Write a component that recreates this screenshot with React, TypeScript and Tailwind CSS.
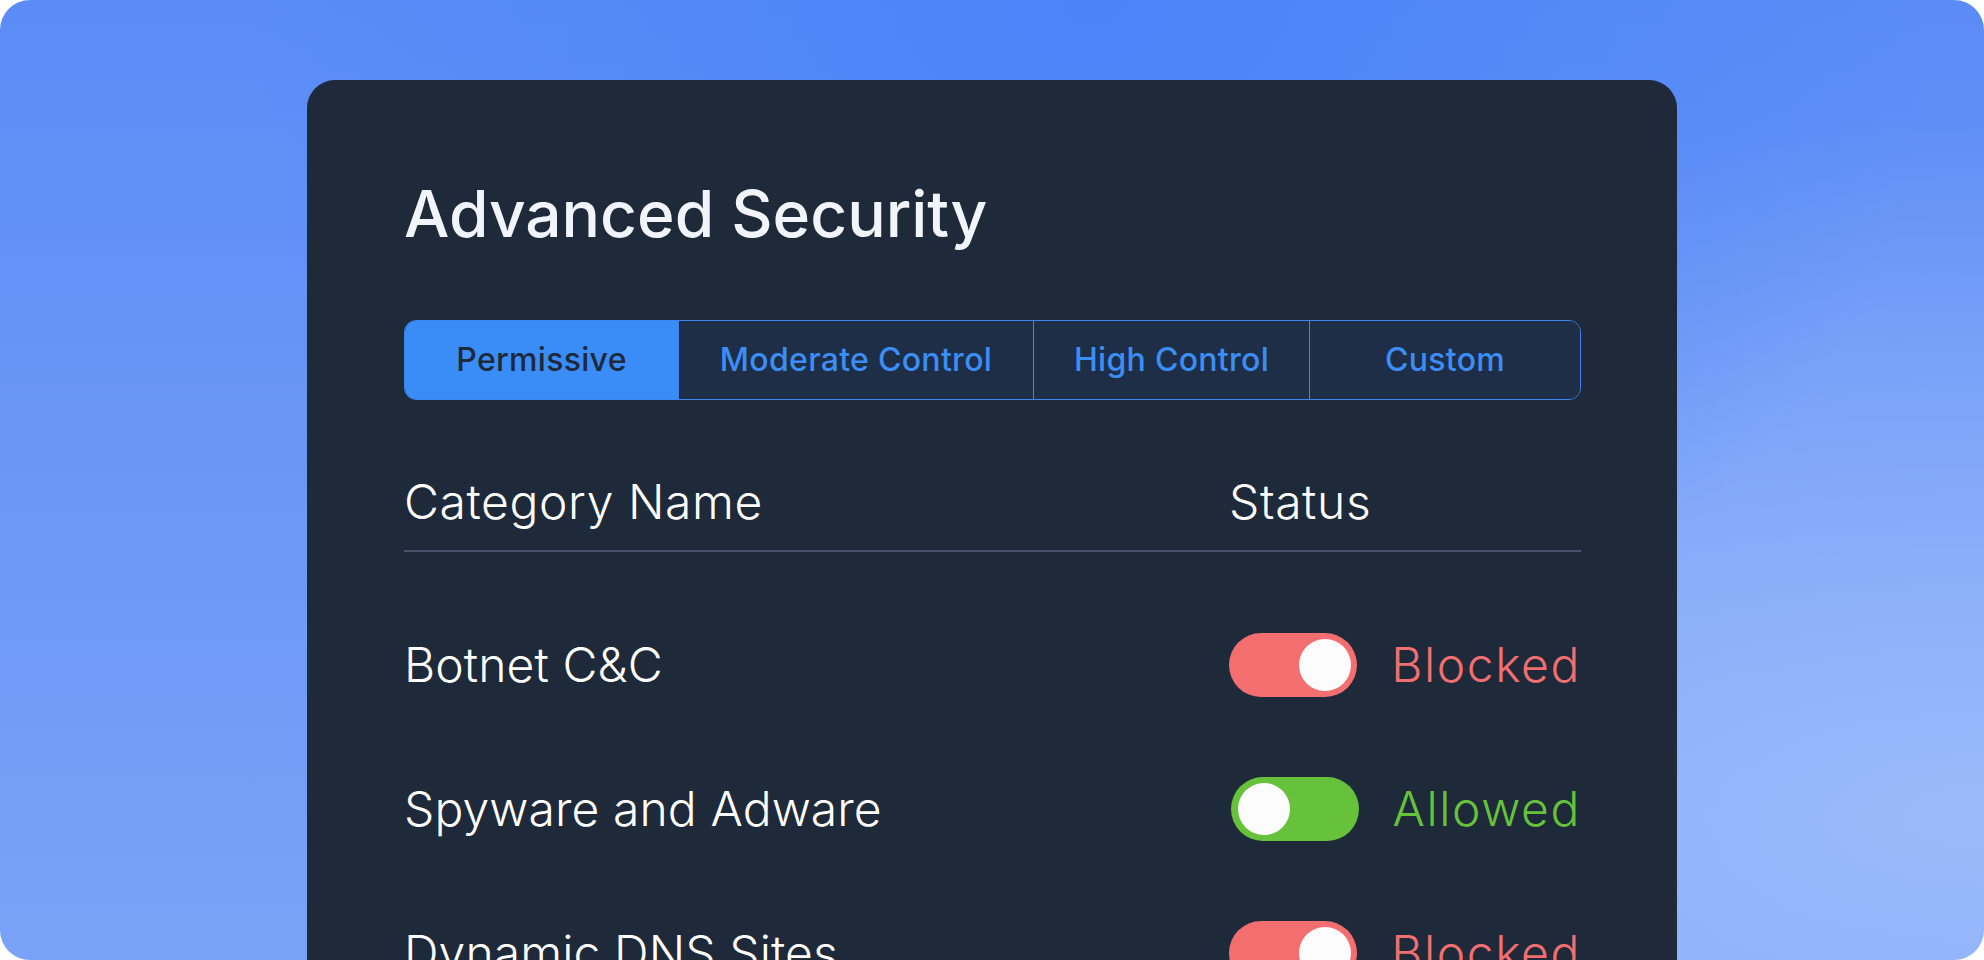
import React from 'react';

const tabs = [
    { label: 'Permissive', width: 'w-[273px]', active: true },
    { label: 'Moderate Control', width: 'w-[355px]', active: false },
    { label: 'High Control', width: 'w-[276px]', active: false },
    { label: 'Custom', width: 'flex-1', active: false },
];

const rows = [
    { name: 'Botnet C&C', blocked: true },
    { name: 'Spyware and Adware', blocked: false },
    { name: 'Dynamic DNS Sites', blocked: true },
];

function Toggle({ on }: { on: boolean }) {
    // "on" = blocked, knob sits right
    return (
        <div
            className={
                on
                    ? 'w-[128px] h-[64px] rounded-full bg-[#f36f6f] flex items-center justify-end px-[6px]'
                    : 'w-[128px] h-[64px] rounded-full bg-[#66c23b] flex items-center justify-start px-[7px]'
            }
        >
            <div className="w-[52px] h-[52px] rounded-full bg-[#fcfcfc]" />
        </div>
    );
}

export default function App() {
    return (
        <div className="w-[1984px] h-[960px] bg-white" style={{ fontFamily: 'Inter, "Noto Sans", sans-serif' }}>
            <div className="h-full rounded-[30px] overflow-hidden pt-[80px] pl-[307px] bg-[radial-gradient(ellipse_at_55%_0%,#4a84f8_0%,transparent_55%),radial-gradient(ellipse_at_100%_85%,#9bbafb_0%,transparent_60%),linear-gradient(180deg,#5b8cf6_0%,#7aa2f6_100%)]">
                {/* Card */}
                <div className="w-[1370px] h-[1000px] rounded-[28px] bg-[#1e2939] pl-[97px] pr-[96px] pt-[102px]">
                    <h1 className="text-[64px] leading-[64px] font-[550] text-[#f1f5f9] tracking-[0px]">
                        Advanced Security
                    </h1>

                    {/* Mode tabs */}
                    <div className="mt-[74px] h-[80px] flex rounded-[12px] border border-[#3b86f0] overflow-hidden">
                        {tabs.map((t, i) => (
                            <div
                                key={t.label}
                                className={[
                                    t.width,
                                    'h-full flex items-center justify-center text-[32px] leading-[32px] font-medium tracking-[0.3px]',
                                    i > 0 ? 'border-l border-[#3b86f0]' : '',
                                    t.active ? 'bg-[#3a8df6] text-[#1e293b]' : 'bg-[#1e2e46] text-[#3b8ef6]',
                                ].join(' ')}
                            >
                                {t.label}
                            </div>
                        ))}
                    </div>

                    {/* Table header */}
                    <div className="mt-[78px] grid grid-cols-[1fr_352px] text-[48px] leading-[48px] font-light text-white tracking-[0.6px]">
                        <span>Category Name</span>
                        <span>Status</span>
                    </div>
                    <div className="mt-[24px] h-[2px] bg-[#46536a]" />

                    {/* Rows */}
                    <div className="mt-[41px]">
                        {rows.map((r) => (
                            <div key={r.name} className="h-[144px] flex items-center justify-between">
                                <span className="text-[48px] leading-[48px] font-light text-white tracking-[0.1px]">{r.name}</span>
                                <div className="flex items-center gap-[34px]">
                                    <Toggle on={r.blocked} />
                                    <span
                                        className={
                                            r.blocked
                                                ? 'text-[48px] leading-[48px] font-light tracking-[1.6px] text-[#f36f6f]'
                                                : 'text-[48px] leading-[48px] font-light tracking-[1.6px] text-[#66c23b]'
                                        }
                                    >
                                        {r.blocked ? 'Blocked' : 'Allowed'}
                                    </span>
                                </div>
                            </div>
                        ))}
                    </div>
                </div>
            </div>
        </div>
    );
}
